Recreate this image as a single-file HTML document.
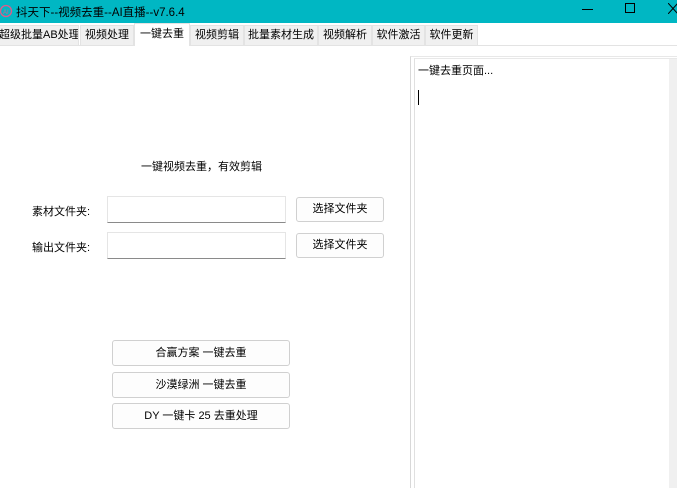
<!DOCTYPE html><html><head><meta charset="utf-8"><style>
*{margin:0;padding:0;box-sizing:border-box}
body{width:677px;height:488px;overflow:hidden;background:#fff;font-family:"Liberation Sans","Noto Sans CJK SC",sans-serif;font-size:11px;color:#000;position:relative}
.a{position:absolute;white-space:nowrap}
.title{left:0;top:0;width:677px;height:23px;background:#00b7c3}
.tab{top:25px;height:20px;background:#f0f0f0;border:1px solid #e3e3e3;border-bottom:none;line-height:19px;text-align:center;font-size:11px;overflow:hidden}
.btn{background:#fdfdfd;border:1px solid #d0d0d0;border-radius:3px;text-align:center;font-size:11px}
.inp{background:#fff;border:1px solid #e5e5e5;border-bottom:1px solid #8a8a8a}
</style></head><body>
<div class="a title"></div>
<svg class="a" style="left:0;top:3px" width="14" height="16"><circle cx="6" cy="8" r="5.5" fill="none" stroke="#e05a8a" stroke-width="1.3"/><text x="3" y="11" font-size="6" fill="#e05a8a" font-family="Liberation Sans">AI</text></svg>
<div class="a" style="left:16px;top:4px;font-size:11.5px;color:#000">抖天下--视频去重--AI直播--v7.6.4</div>
<div class="a" style="left:582px;top:9px;width:11px;height:1px;background:#000"></div>
<div class="a" style="left:625px;top:3px;width:10px;height:10px;border:1px solid #000"></div>
<svg class="a" style="left:668px;top:3px" width="10" height="11"><path d="M0 0L10 11M10 0L0 11" stroke="#000" stroke-width="1"/></svg>
<div class="a" style="left:0;top:45px;width:677px;height:1px;background:#e3e3e3"></div>
<div class="a tab" style="left:-2px;width:81px">超级批量AB处理</div>
<div class="a tab" style="left:80px;width:54px">视频处理</div>
<div class="a tab" style="left:134px;top:23px;height:23px;width:56px;background:#fff;border-color:#e3e3e3;line-height:20px">一键去重</div>
<div class="a tab" style="left:190px;width:54px">视频剪辑</div>
<div class="a tab" style="left:244px;width:74px">批量素材生成</div>
<div class="a tab" style="left:318px;width:54px">视频解析</div>
<div class="a tab" style="left:372px;width:53px">软件激活</div>
<div class="a tab" style="left:425px;width:53px">软件更新</div>
<div class="a" style="left:141px;top:158px">一键视频去重，有效剪辑</div>
<div class="a" style="left:32px;top:203px">素材文件夹:</div>
<div class="a" style="left:32px;top:239px">输出文件夹:</div>
<div class="a inp" style="left:107px;top:196px;width:179px;height:27px"></div>
<div class="a inp" style="left:107px;top:232px;width:179px;height:27px"></div>
<div class="a btn" style="left:296px;top:197px;width:88px;height:25px;line-height:23px">选择文件夹</div>
<div class="a btn" style="left:296px;top:233px;width:88px;height:25px;line-height:23px">选择文件夹</div>
<div class="a btn" style="left:112px;top:340px;width:178px;height:26px;line-height:24px">合赢方案 一键去重</div>
<div class="a btn" style="left:112px;top:372px;width:178px;height:26px;line-height:24px">沙漠绿洲 一键去重</div>
<div class="a btn" style="left:112px;top:403px;width:178px;height:26px;line-height:24px">DY 一键卡 25 去重处理</div>
<div class="a" style="left:410px;top:56px;width:267px;height:432px;border-left:1px solid #d8d8d8;border-top:1px solid #e8e8e8"></div>
<div class="a" style="left:414px;top:58px;width:263px;height:430px;border-left:1px solid #e0e0e0;border-top:1px solid #e8e8e8"></div>
<div class="a" style="left:669px;top:59px;width:8px;height:429px;background:#f0f0f0"></div>
<div class="a" style="left:418px;top:62px">一键去重页面...</div>
<div class="a" style="left:418px;top:90px;width:1px;height:15px;background:#000"></div>
</body></html>
